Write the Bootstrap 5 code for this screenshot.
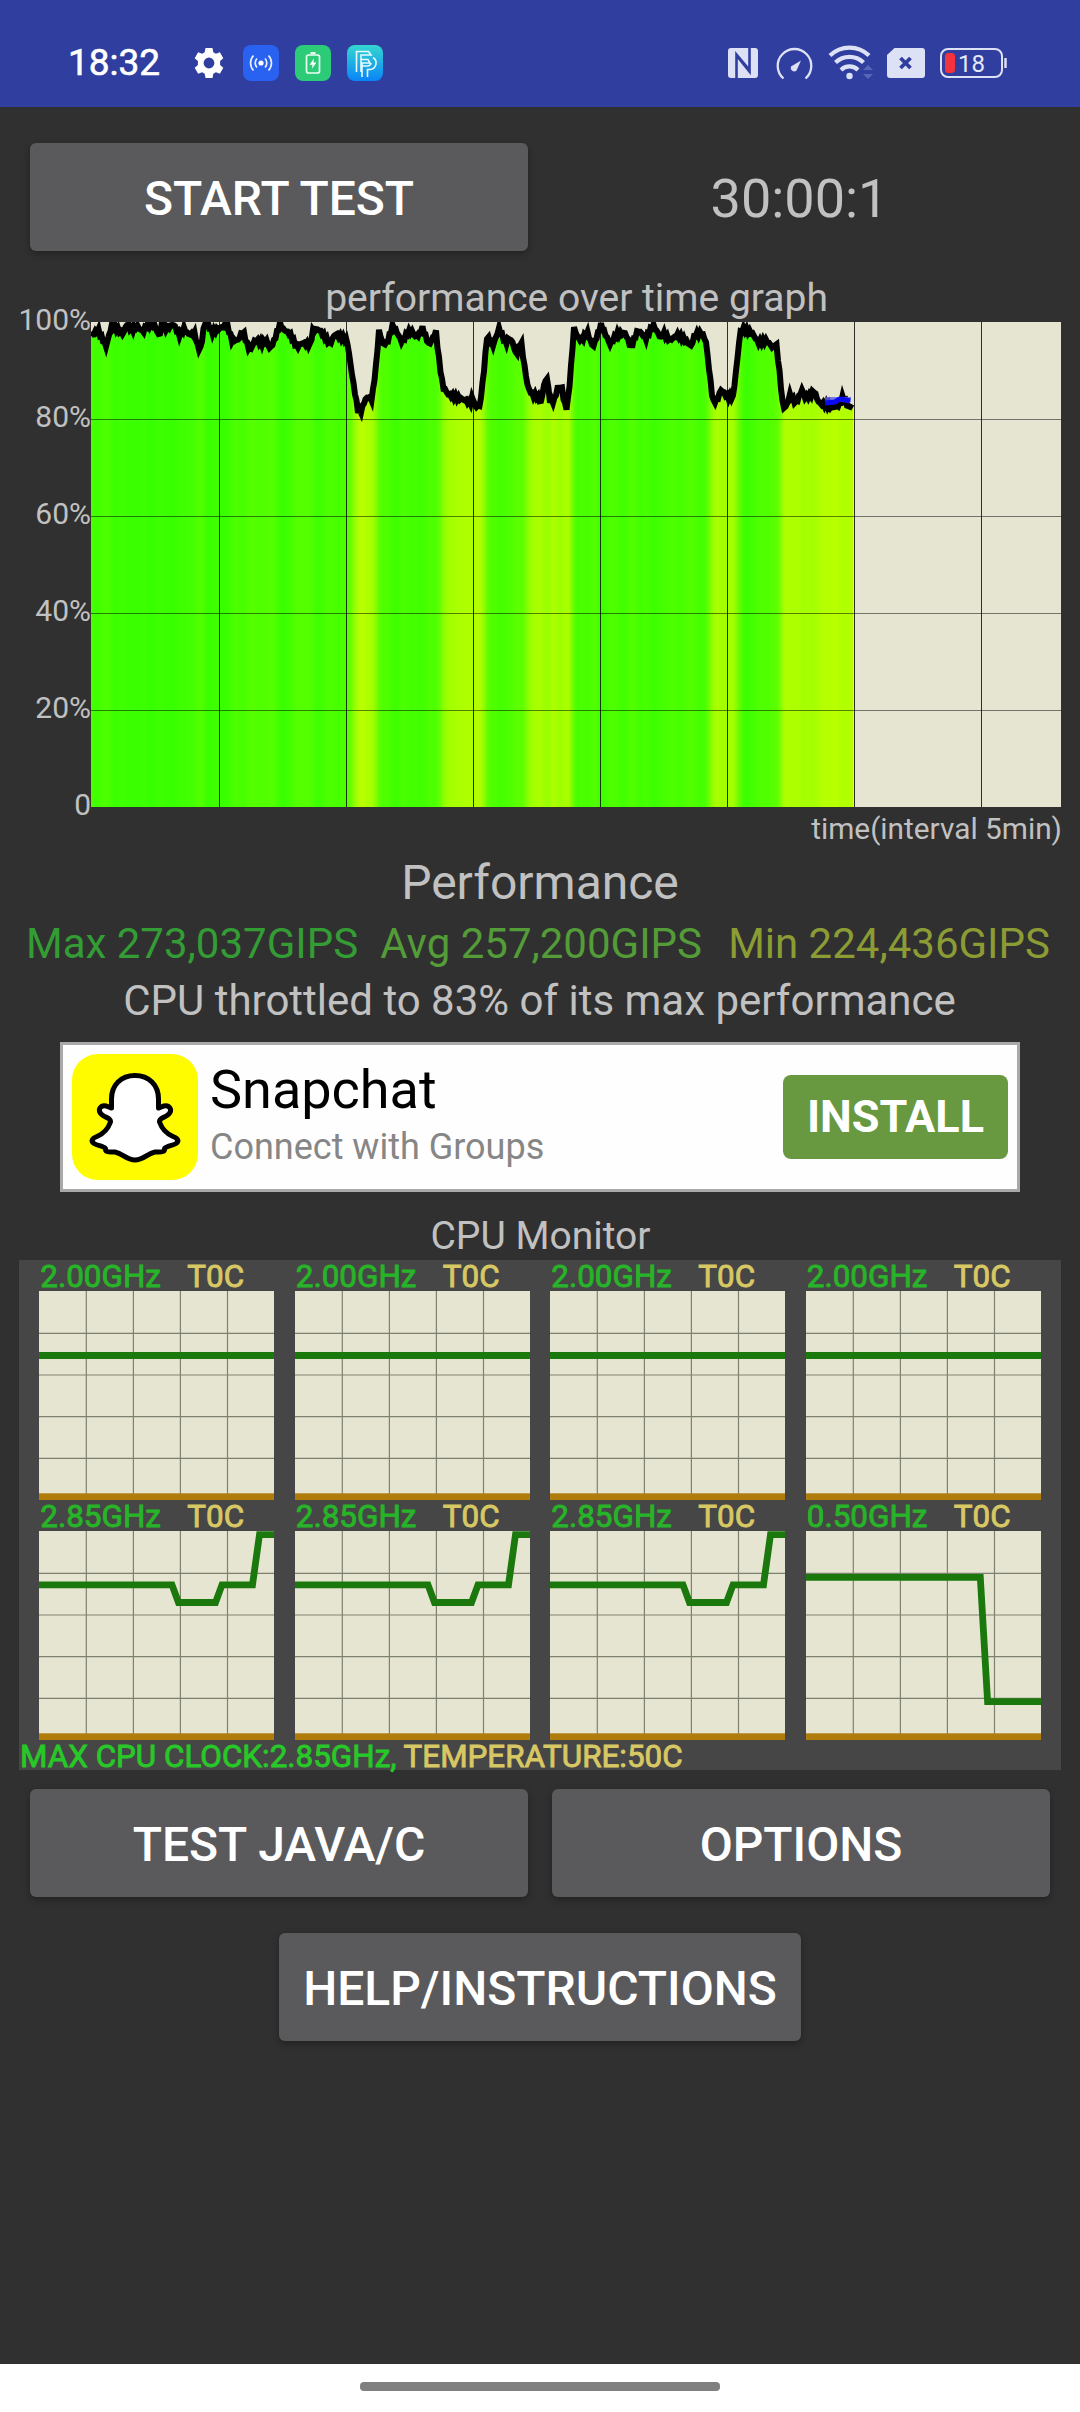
<!DOCTYPE html>
<html lang="en">
<head>
<meta charset="utf-8">
<meta name="viewport" content="width=device-width, initial-scale=1">
<title>CPU Throttling Test</title>
<link rel="stylesheet" href="https://cdn.jsdelivr.net/npm/bootstrap@5.3.0/dist/css/bootstrap.min.css">
<style>
  body { font-family: Roboto, "Liberation Sans", sans-serif; background: #303030; color: #c1c1c1; width: 1080px; height: 2412px; overflow: hidden; }
  svg { display: block; flex: none; }
  .status { height: 107px; background: #303f9f; padding: 18px 71px 0 68px; }
  .clock { font-size: 37px; font-weight: 400; -webkit-text-stroke: .6px; color: #fff; line-height: 44px; width: 125px; }
  .tray-left { gap: 16px; margin-left: 18px; }
  .app-btn { height: 108px; border: 0; border-radius: 6px; background: #5a5a5c; color: #fff; font-size: 48px; font-weight: 500; padding: 3px 0 0; box-shadow: 0 3px 7px rgba(0,0,0,.3); }
  .app-btn:hover { background: #666; color: #fff; }
  .btn-row { padding: 0 30px; gap: 24px; }
  .btn-row > * { flex: 1 1 0; min-width: 0; }
  .top-row { padding-top: 36px; }
  .timer { font-size: 54px; line-height: 108px; height: 108px; }
  .timer span { display: block; margin-left: -3px; padding-top: 2px; }
  .graph-title { margin-top: 24px; height: 47px; line-height: 46px; font-size: 39px; padding-left: 73px; }
  .axis { width: 91px; height: 485px; margin-top: -2px; line-height: 0; font-size: 30px; }
  .time-label { font-size: 29.8px; line-height: 43px; padding-right: 18px; }
  .perf-head { font-size: 48px; line-height: 65px; height: 63px; }
  .gips { font-size: 42px; line-height: 61px; height: 59px; padding: 0 30px 0 26px; }
  .g-max { color: #349c34; } .g-avg { color: #539c38; margin-right: 4px; } .g-min { color: #8c9c35; }
  .throttle { font-size: 42px; line-height: 57px; padding-right: 1px; }
  .promo { margin: 13px 60px 0; height: 150px; background: #fefefe; border: 3px solid #a9a9a9; padding: 0 9px; }
  .promo-text { margin-left: 12px; padding-bottom: 6px; }
  .promo-name { font-size: 54px; line-height: 62px; color: #000; }
  .promo-sub { font-size: 36px; line-height: 46px; color: #868686; margin-top: 3px; }
  .promo-btn { width: 225px; height: 84px; border: 0; border-radius: 8px; background: #689840; color: #fff; font-size: 45px; font-weight: 700; padding: 0; }
  .mon-title { margin-top: 20px; font-size: 39px; line-height: 49px; height: 47px; padding-left: 1px; }
  .monitor { margin: 1px 19px 0; height: 510px; background: #464646; font-size: 31.4px; -webkit-text-stroke: .9px; }
  .cores { display: grid; grid-template-columns: repeat(4, 235px); column-gap: 20.5px; padding-left: 20.3px; }
  .core-label { height: 31px; line-height: 34px; }
  .core-freq { width: 148px; padding-left: 1px; color: #28b428; }
  .temp { color: #d8c864; }
  .clock-line { line-height: 33px; padding-left: 1px; color: #28c828; }
  .lower { margin-top: 19px; }
  .help { margin-top: 36px; width: 522px; }
  .gesture { height: 48px; background: #fff; padding-top: 18px; }
  .pill { width: 360px; height: 9px; border-radius: 4px; background: #808080; }
</style>
</head>
<body class="d-flex flex-column">

<svg width="0" height="0" class="position-absolute">
  <defs>
    <g id="grid">
      <rect width="235" height="209" fill="#e6e5d2"/>
      <path d="M47.3 0V209M94.4 0V209M141.4 0V209M188.5 0V209M0 42.3H235M0 84H235M0 125.7H235M0 167.4H235" stroke="#7e8170" stroke-width="1.2"/>
      <rect y="202.3" width="235" height="6.7" fill="#b07c0c"/>
    </g>
    <g id="flat"><use href="#grid"/><path d="M0 64.5H235" stroke="#1a780c" stroke-width="7"/></g>
    <g id="boost"><use href="#grid"/><path d="M0 53.8H133L139.5 71.5H176.5L183 53.8H213.5L220.5 3.6H235" fill="none" stroke="#1a780c" stroke-width="6.8"/></g>
    <g id="drop"><use href="#grid"/><path d="M0 46.4H174.3L181.6 170.6H235" fill="none" stroke="#1a780c" stroke-width="6.8"/></g>
  </defs>
</svg>

<header class="status d-flex justify-content-between align-items-center flex-shrink-0">
  <div class="d-flex align-items-center">
    <div class="clock">18:32</div>
    <svg width="32" height="32" viewBox="0 0 32 32">
      <path fill="#fff" fill-rule="evenodd" d="M12.5 1h7l.8 4.2 2.6 1.5 4-1.5 3.4 6-3.2 2.8v4l3.2 2.8-3.4 6-4-1.5-2.6 1.5-.8 4.2h-7l-.8-4.2-2.6-1.5-4 1.5-3.4-6L4.900 18v-4L1.700 11.200l3.400-6 4 1.500 2.600-1.500zM16 10.600a5.400 5.400 0 1 0 0 10.800 5.400 5.400 0 0 0 0-10.800z"/>
    </svg>
    <div class="tray-left d-flex align-items-center">
      <svg width="36" height="36" viewBox="0 0 36 36">
        <rect width="36" height="36" rx="8" fill="#2962f0"/>
        <circle cx="18" cy="18" r="2.600" fill="#fff"/>
        <path d="M14 13.500a6.500 6.500 0 0 0 0 9M22 13.500a6.500 6.500 0 0 1 0 9M10.500 10.500a11 11 0 0 0 0 15M25.500 10.500a11 11 0 0 1 0 15" fill="none" stroke="#e8eeff" stroke-width="1.700"/>
      </svg>
      <svg width="36" height="36" viewBox="0 0 36 36">
        <rect width="36" height="36" rx="8" fill="#2ccb78"/>
        <rect x="11.500" y="10" width="13" height="18" rx="2" fill="none" stroke="#eafff2" stroke-width="1.700"/>
        <path d="M15.500 8h5" stroke="#eafff2" stroke-width="2"/>
        <path d="M19 13.500l-4.500 6.200h3l-.6 4 4.500-6.200h-3z" fill="#fff"/>
      </svg>
      <svg width="36" height="36" viewBox="0 0 36 36">
        <defs><linearGradient id="pf" x2="0" y2="1"><stop stop-color="#34d6d0"/><stop offset="1" stop-color="#0a84f8"/></linearGradient></defs>
        <rect width="36" height="36" rx="8" fill="url(#pf)"/>
        <path d="M9.500 27V6.500H21.500L24 10H14V27M14 14.500H21L23 18H15V32M20.500 32V24.500H23a6.500 6.500 0 0 0 3-12M15 21H21a3.500 3.500 0 0 0 3-3" fill="none" stroke="#e4fbff" stroke-width="1.600"/>
      </svg>
    </div>
  </div>

  <svg width="281" height="36" viewBox="728 44 281 36" fill="none">
    <rect x="728" y="47" width="30" height="30" rx="3" fill="#dde1f5"/>
    <path d="M736.500 77V53.500L749.500 69V60M749.500 47V70.500L737 55" stroke="#303f9f" stroke-width="2.600"/>
    <path d="M783.500 77.500A16.800 16.800 0 1 1 805.500 77.500" stroke="#dde1f5" stroke-width="2.300"/>
    <path d="M801 59.500L796.500 69.500a3.500 3.500 0 0 1-5.500-4z" fill="#dde1f5"/>
    <path d="M830 54.500a28 28 0 0 1 39 0M835.500 61.500a20 20 0 0 1 28 0M841 69a12 12 0 0 1 17 0" stroke="#dde1f5" stroke-width="4.200"/>
    <circle cx="849.500" cy="75" r="3.200" fill="#dde1f5"/>
    <path d="M863 69l5-5 5 5zM863 73l5 5 5-5z" fill="#5966b8"/>
    <path d="M894.500 47H922a3 3 0 0 1 3 3V74a3 3 0 0 1-3 3H890a3 3 0 0 1-3-3V54z" fill="#dde1f5"/>
    <path d="M900.500 57l10 10M910.500 57l-10 10" stroke="#303f9f" stroke-width="3.800"/>
    <rect x="941" y="48" width="61" height="28" rx="7" stroke="#dde1f5" stroke-width="2"/>
    <path d="M1005.500 57V67" stroke="#dde1f5" stroke-width="2.500"/>
    <rect x="945" y="52" width="10" height="20" rx="3.500" fill="#f5333f"/>
    <text x="958" y="71" font-size="24" font-weight="400" fill="#e6e9f8" font-family="Roboto, sans-serif">18</text>
  </svg>
</header>

<main class="d-flex flex-column flex-grow-1">
  <div class="btn-row top-row d-flex align-items-center">
    <button class="btn app-btn" type="button">START TEST</button>
    <div class="timer text-center"><span>30:00:1</span></div>
  </div>

  <div class="graph-title text-center">performance over time graph</div>
  <div class="d-flex align-items-start">
    <div class="axis d-flex flex-column justify-content-between text-end">
      <span>100%</span><span>80%</span><span>60%</span><span>40%</span><span>20%</span><span>0</span>
    </div>
    <svg id="history" width="970" height="485" viewBox="91 322 970 485"></svg>
  </div>
  <div class="time-label text-end">time(interval 5min)</div>

  <div class="perf-head text-center">Performance</div>
  <div class="gips d-flex justify-content-between">
    <span class="g-max">Max 273,037GIPS</span><span class="g-avg">Avg 257,200GIPS</span><span class="g-min">Min 224,436GIPS</span>
  </div>
  <div class="throttle text-center">CPU throttled to 83% of its max performance</div>

  <section class="promo d-flex align-items-center">
    <svg width="126" height="126" viewBox="0 0 126 126">
      <rect width="126" height="126" rx="26" fill="#fffc00"/>
      <path d="M63 21.500C49 21.500 39.500 31 39.500 45V54C36 53 33 50.500 29.500 52.500C26 55 27 59 31 61.500C34.500 64 39 64 38.500 68C36 75 31 80 25 82.500C20 84.500 18.500 87 22 89.500C26 92 31 91.500 33.500 94.500C33 99 38 97.500 43 98C51 99.500 54 106 63 106C72 106 75 99.500 83 98C88 97.500 93 99 92.500 94.500C95 91.500 100 92 104 89.500C107.500 87 106 84.500 101 82.500C95 80 90 75 87.500 68C87 64 91.500 64 95 61.500C99 59 100 55 96.500 52.500C93 50.500 90 53 86.500 54V45C86.500 31 77 21.500 63 21.500Z" fill="#fff" stroke="#000" stroke-width="5" stroke-linejoin="round"/>
    </svg>
    <div class="promo-text flex-grow-1">
      <div class="promo-name">Snapchat</div>
      <div class="promo-sub">Connect with Groups</div>
    </div>
    <button class="btn promo-btn" type="button">INSTALL</button>
  </section>

  <div class="mon-title text-center">CPU Monitor</div>
  <section class="monitor">
    <div class="cores">
      <div><div class="core-label d-flex"><span class="core-freq">2.00GHz</span><span class="temp">T0C</span></div><svg width="235" height="209"><use href="#flat"/></svg></div>
      <div><div class="core-label d-flex"><span class="core-freq">2.00GHz</span><span class="temp">T0C</span></div><svg width="235" height="209"><use href="#flat"/></svg></div>
      <div><div class="core-label d-flex"><span class="core-freq">2.00GHz</span><span class="temp">T0C</span></div><svg width="235" height="209"><use href="#flat"/></svg></div>
      <div><div class="core-label d-flex"><span class="core-freq">2.00GHz</span><span class="temp">T0C</span></div><svg width="235" height="209"><use href="#flat"/></svg></div>
      <div><div class="core-label d-flex"><span class="core-freq">2.85GHz</span><span class="temp">T0C</span></div><svg width="235" height="209"><use href="#boost"/></svg></div>
      <div><div class="core-label d-flex"><span class="core-freq">2.85GHz</span><span class="temp">T0C</span></div><svg width="235" height="209"><use href="#boost"/></svg></div>
      <div><div class="core-label d-flex"><span class="core-freq">2.85GHz</span><span class="temp">T0C</span></div><svg width="235" height="209"><use href="#boost"/></svg></div>
      <div><div class="core-label d-flex"><span class="core-freq">0.50GHz</span><span class="temp">T0C</span></div><svg width="235" height="209"><use href="#drop"/></svg></div>
    </div>
    <div class="clock-line">MAX CPU CLOCK:2.85GHz, <span class="temp">TEMPERATURE:50C</span></div>
  </section>

  <div class="btn-row lower d-flex">
    <button class="btn app-btn" type="button">TEST JAVA/C</button>
    <button class="btn app-btn" type="button">OPTIONS</button>
  </div>
  <button class="btn app-btn help align-self-center" type="button">HELP/INSTRUCTIONS</button>
</main>

<footer class="gesture d-flex justify-content-center flex-shrink-0"><div class="pill"></div></footer>

<script src="https://cdn.jsdelivr.net/npm/bootstrap@5.3.0/dist/js/bootstrap.bundle.min.js"></script>
<script>
  // Performance samples: x, y pairs in graph space (y 322 = 100 %, y 807 = 0 %)
  const raw = "91,336 98,330 101,336 106,346 112,325 117,329 123,334 127,324 132,330 137,326 143,332 147,325 154,324 159,336 162,325 167,329 173,324 180,335 184,329 188,334 195,334 198,348 201,348 204,325 208,324 212,332 218,329 227,325 232,340 238,340 243,331 248,347 252,347 255,340 262,343 266,340 270,349 274,341 280,324 283,329 290,334 297,347 302,343 310,345 313,331 318,329 323,334 330,344 335,334 347,340 353,381 358,411 361,411 365,400 368,397 372,399 376,366 379,331 383,344 387,343 393,325 402,342 408,332 412,332 415,336 419,335 422,327 429,345 436,332 437,342 440,367 443,387 448,394 455,397 465,400 470,403 473,397 475,406 480,406 484,370 487,337 493,345 499,329 506,343 509,338 513,343 516,355 521,341 524,363 528,388 533,395 537,396 541,402 544,385 547,378 550,401 554,401 558,387 562,388 564,402 567,409 570,380 574,328 578,338 582,340 587,332 593,347 601,325 610,344 617,334 625,333 631,347 638,330 646,338 653,325 661,338 663,333 670,340 678,335 685,340 691,346 695,335 702,333 706,342 710,377 713,402 717,400 721,390 728,397 733,397 737,363 740,333 744,329 752,333 758,342 767,341 773,348 776,342 779,367 783,407 786,407 790,395 796,403 802,390 805,397 810,396 814,391 819,403 827,405 835,407 839,405 843,397 849,408 852,403";
  const pts = raw.split(" ").map(p => p.split(",").map(Number));
  const level = x => {
    for (let i = 1; i < pts.length; i++) {
      const [a, b] = [pts[i - 1], pts[i]];
      if (x <= b[0]) return a[1] + (b[1] - a[1]) * (x - a[0]) / (b[0] - a[0]);
    }
    return pts[pts.length - 1][1];
  };
  let out = '<rect x="91" y="322" width="970" height="485" fill="#e6e5d2"/><g shape-rendering="crispEdges">';
  for (let x = 91; x < 853; x += 2) {
    const y = level(x);
    const avg = (level(x - 3 < 91 ? 91 : x - 3) + y + level(x + 3)) / 3;
    const red = Math.round(Math.min(205, 52 + (avg - 324) * 1.6));
    out += `<rect x="${x}" y="${y.toFixed(1)}" width="2" height="${(807 - y).toFixed(1)}" fill="rgb(${red},255,0)"/>`;
  }
  out += '</g><g shape-rendering="crispEdges" fill="#000">';
  for (let i = 0; i < 7; i++) out += `<rect x="${218.6 + 127.1 * i}" y="322" width="1" height="485" fill-opacity=".8"/>`;
  for (let i = 1; i < 5; i++) out += `<rect x="91" y="${322 + 97 * i}" width="970" height="1" fill-opacity=".5"/>`;
  out += '</g>';
  let line = '';
  for (let x = 91; x <= 852; x += 1.5) line += `${x},${(level(x) + 1.9 * Math.sin(x * 1.9)).toFixed(1)} `;
  out += `<polyline points="${line}" fill="none" stroke="#000" stroke-width="6" stroke-linejoin="miter"/>`;
  out += '<path d="M825 399.500H851" stroke="#5a5af0" stroke-width="5" stroke-opacity=".8"/><path d="M825 403L835 402L840 399L850 401" fill="none" stroke="#0a0af0" stroke-width="5"/>';
  document.getElementById("history").innerHTML = out;
</script>
</body>
</html>
